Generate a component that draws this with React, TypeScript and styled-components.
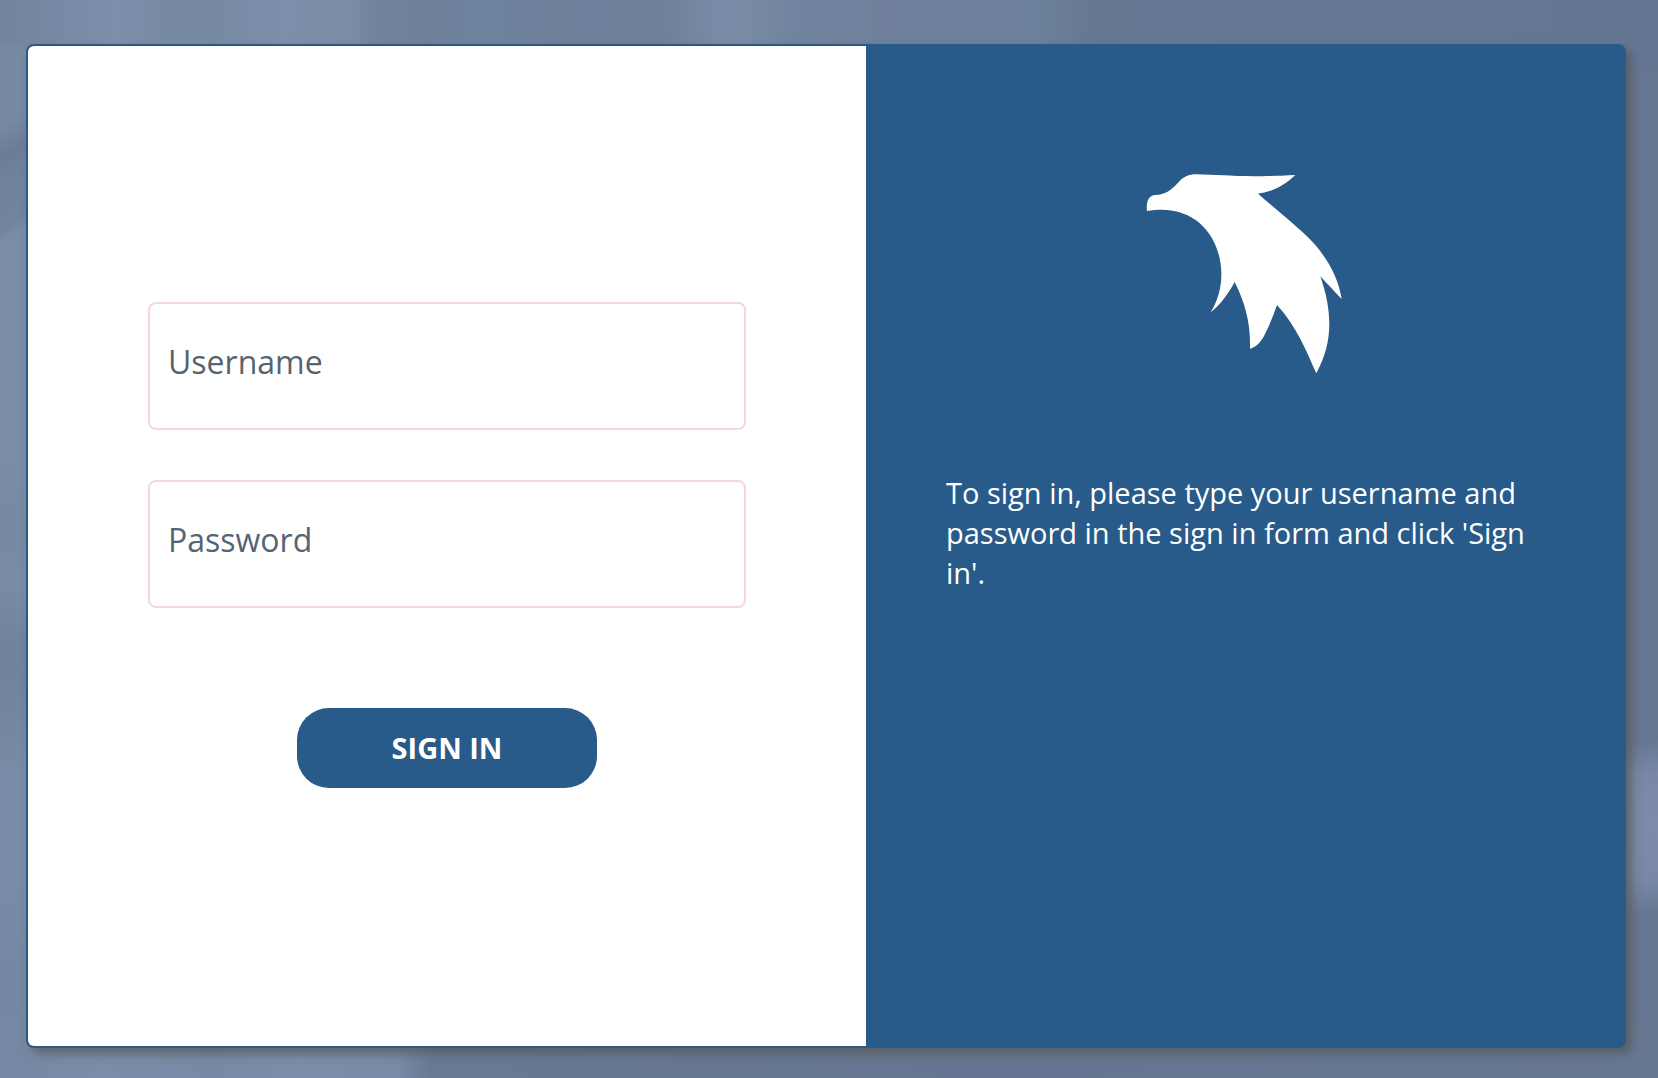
import React, { useState } from "react";
import styled, { createGlobalStyle } from "styled-components";

const brand = "#285b89";

const GlobalStyle = createGlobalStyle`
  *, *::before, *::after { box-sizing: border-box; }
  body {
    margin: 0;
    font-family: "Open Sans", "Noto Sans", sans-serif;
  }
`;

const Page = styled.div`
  display: flex;
  min-height: 100vh;
  padding: 44px 32px 30px 26px;
  background:
    linear-gradient(150deg, rgba(112, 129, 155, 0) 30%, rgba(106, 122, 149, 0.9) 46%, #70819c 56%, #73849f 84%, rgba(115, 132, 159, 0) 88%) 0 70px / 40px 170px no-repeat,
    linear-gradient(180deg, rgba(123, 139, 168, 0), #7888a5 20%, #7b8ba8 50%, #7888a5 80%, rgba(123, 139, 168, 0)) 100% 740px / 60px 175px no-repeat,
    linear-gradient(180deg, #7788a3 0%, #7788a3 7%, #7b8ca7 20%, #7b8ca7 38%, #7688a3 45%, #7a8ba6 50%, #71829d 56%, #73849f 61%, #7a8ba7 68%, #7a8ba7 76%, #7587a2 86%, #7788a4 100%) 0 44px / 28px 100% no-repeat,
    linear-gradient(90deg, #7587a2 0%, #7b8ca8 6%, #7789a4 13%, #7b8da9 18%, #788aa6 24%, #687993 26%, #667692 60%, #677892 100%) 0 100% / 100% 60px no-repeat,
    linear-gradient(90deg, #73849f 0%, #788aa5 4%, #7d8eaa 7%, #778aa4 10%, #768aa4 13%, #7d8eaa 17%, #7b8ca7 21%, #71829c 23%, #6f809b 26%, #6d839e 29%, #6f809c 33%, #6e809a 40%, #788aa5 43%, #788ba5 45%, #70849f 48%, #70809c 54%, #6d829c 62%, #657892 66%, #667793 80%, #657695 100%) 0 0 / 100% 70px no-repeat,
    #667792;
`;

const Card = styled.main`
  flex: 1;
  display: grid;
  grid-template-columns: minmax(0, 838fr) minmax(0, 758fr);
  border: 2px solid ${brand};
  border-radius: 8px;
  background: ${brand};
  box-shadow: 6px 6px 10px rgba(85, 85, 85, 0.7);
`;

const FormPane = styled.form`
  display: flex;
  flex-direction: column;
  justify-content: center;
  gap: 50px;
  padding: 0 120px 2px;
  border-radius: 6px 0 0 6px;
  background: #fff;
`;

const Field = styled.div`
  display: grid;
  grid-template-areas: "field";
`;

const FieldLabel = styled.label`
  grid-area: field;
  align-self: center;
  z-index: 1;
  padding: 0 20px 8px;
  font-size: 32px;
  line-height: 44px;
  color: #546472;
  pointer-events: none;
`;

const FieldInput = styled.input`
  grid-area: field;
  width: 100%;
  height: 128px;
  padding: 0 20px 8px;
  border: 2px solid #f8d7da;
  border-radius: 8px;
  background: transparent;
  color: #546472;
  font-family: inherit;
  font-size: 32px;
  outline: none;
`;

const SubmitButton = styled.button`
  align-self: center;
  width: 300px;
  height: 80px;
  margin-top: 50px;
  padding: 0;
  border: 0;
  border-radius: 32px;
  background: ${brand};
  color: #fff;
  font-family: inherit;
  font-size: 29px;
  font-weight: 700;
  line-height: 40px;
  text-transform: uppercase;
  cursor: pointer;
`;

const InfoPane = styled.section`
  display: flex;
  flex-direction: column;
  gap: 99px;
  padding: 128px 80px;
`;

const Logo = styled.svg`
  align-self: center;
  width: 200px;
  height: 200px;
  fill: #fff;
`;

const Instructions = styled.p`
  margin: 0;
  color: #fff;
  font-size: 29px;
  line-height: 40px;
`;

function TextField({ id, label, type }: { id: string; label: string; type: string }) {
  const [value, setValue] = useState("");
  return (
    <Field>
      <FieldLabel htmlFor={id}>{value ? "" : label}</FieldLabel>
      <FieldInput
        id={id}
        type={type}
        aria-label={label}
        value={value}
        onChange={(e) => setValue(e.target.value)}
      />
    </Field>
  );
}

export default function App() {
  return (
    <>
      <GlobalStyle />
      <Page>
        <Card>
          <FormPane onSubmit={(e) => e.preventDefault()}>
            <TextField id="username" label="Username" type="text" />
            <TextField id="password" label="Password" type="password" />
            <SubmitButton type="submit">Sign in</SubmitButton>
          </FormPane>
          <InfoPane>
            <Logo viewBox="45 42 600 600" role="img" aria-label="Bird logo">
              <path d="M51 153 C48 126 55 106 76 105 C105 104 123 91 144 68 C162 49 176 43 200 43 C282 44 330 54 496 45 C466 74 431 95 384 101 C438 148 496 194 534 232 C588 286 624 348 635 417 C614 395 593 373 571 349 C611 465 606 553 559 640 C529 573 501 501 441 435 C430 467 417 499 402 528 C391 548 378 561 360 566 C362 490 346 431 314 366 C294 402 272 434 242 457 C264 421 275 380 274 339 C272 231 196 128 51 153 Z" />
            </Logo>
            <Instructions>
              To sign in, please type your username and password in the sign in form and click 'Sign in'.
            </Instructions>
          </InfoPane>
        </Card>
      </Page>
    </>
  );
}
